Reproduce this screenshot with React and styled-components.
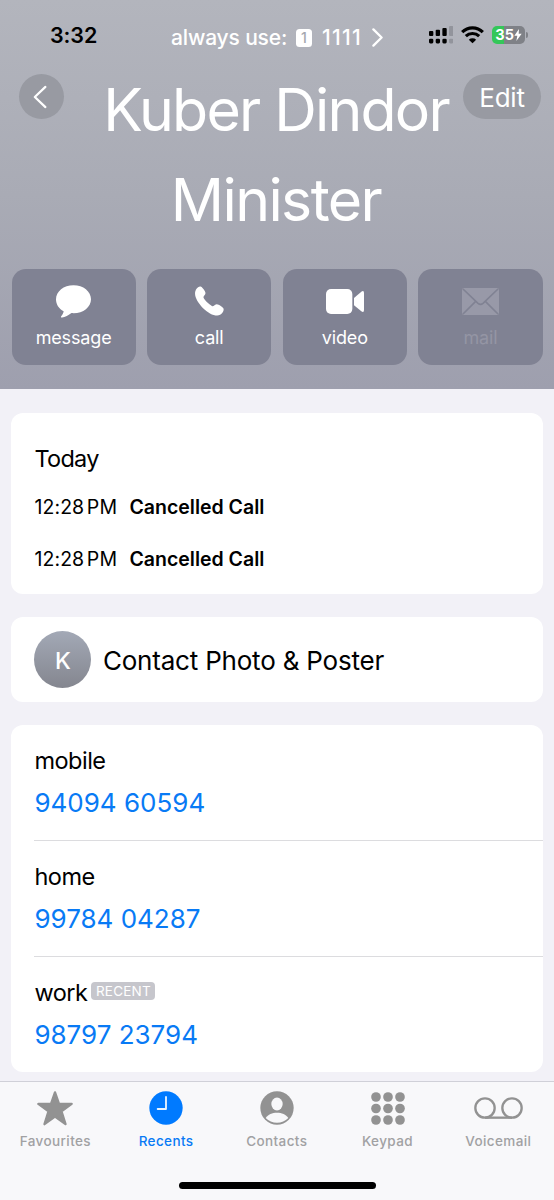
import styled, { createGlobalStyle } from "styled-components";

const calls = [
  { time: "12:28 PM", type: "Cancelled Call" },
  { time: "12:28 PM", type: "Cancelled Call" },
];

const phones = [
  { label: "mobile", number: "94094 60594" },
  { label: "home", number: "99784 04287" },
  { label: "work", number: "98797 23794", recent: true },
];

const SignalIcon = () => (
  <svg width="24.4" height="17.4" viewBox="0 0 73 52">
    <rect x="0" y="15" width="13" height="15" rx="3" />
    <rect x="20" y="11" width="13" height="19" rx="3" />
    <rect x="40" y="6" width="13" height="24" rx="3" />
    <rect x="60" y="0" width="13" height="30" rx="3" fill="#92949c" />
    <rect x="0" y="38" width="13" height="14" rx="4" />
    <rect x="20" y="38" width="13" height="14" rx="4" />
    <rect x="40" y="38" width="13" height="14" rx="4" />
    <rect x="60" y="38" width="13" height="14" rx="4" fill="#92949c" />
  </svg>
);

const WifiIcon = () => (
  <svg width="23" height="17.4" viewBox="0 0 69 52">
    <g fill="none" stroke="#000" strokeWidth="9.5">
      <path d="M3.5 18.5a44 44 0 0 1 62 0" />
      <path d="M14.5 30.5a29 29 0 0 1 40 0" />
    </g>
    <path d="M34.5 51.5L23.500 41a16 16 0 0 1 22 0z" />
  </svg>
);

const BoltIcon = () => (
  <svg width="8" height="12" viewBox="0 0 24 36">
    <path d="M15 0L1 20h9L7 36 23 14h-9z" fill="#fff" />
  </svg>
);

const ForwardIcon = () => (
  <svg width="11" height="19" viewBox="0 0 11 19">
    <path
      d="M1.400 1.400L9.600 9.500l-8.200 8.100"
      fill="none"
      stroke="#fff"
      strokeWidth="2.3"
      strokeLinecap="round"
      strokeLinejoin="round"
    />
  </svg>
);

const BackIcon = () => (
  <svg width="14" height="24" viewBox="0 0 14 24">
    <path
      d="M12.400 1.900L1.800 12l10.600 10.100"
      fill="none"
      stroke="#fff"
      strokeWidth="2.2"
      strokeLinecap="round"
      strokeLinejoin="round"
    />
  </svg>
);

const MessageIcon = () => (
  <svg width="35" height="33" viewBox="0 0 105 98">
    <path
      d="M52.500 0C82 0 105 18.500 105 42S82 84 52.500 84c-2 0-4 0-6-.3C38 90 27 96 18 97c-3 .2-4-2-2.500-4C19 89 22 84 23 78 8 70 0 57 0 42 0 18.500 23 0 52.500 0z"
      fill="#fff"
    />
  </svg>
);

const CallIcon = () => (
  <svg width="29" height="29.6" viewBox="0 0 86 88">
    <path
      d="M4 9C8 2 14 0 18 2c4 2 12 12 13 18 1 5-5 9-6 13-1 5 17 23 26 27 4 1 9-6 14-6s19 9 20 14c1 8-6 20-19 20C40 88 0 48 0 22 0 17 2 12 4 9z"
      fill="#fff"
    />
  </svg>
);

const VideoIcon = () => (
  <svg width="38" height="25" viewBox="0 0 114 75">
    <rect width="79" height="75" rx="15" fill="#fff" />
    <path d="M84 27L106 8q8-5 8 4v51q0 9-8 4L84 49z" fill="#fff" />
  </svg>
);

const MailIcon = () => (
  <svg width="37" height="27" viewBox="0 0 111 81">
    <rect width="111" height="81" rx="7" fill="#9899a8" />
    <path
      d="M3 3l45 43q7.500 6 15 0L108 3M3 78l38-38M108 78L70 40"
      fill="none"
      stroke="#808293"
      strokeWidth="5"
    />
  </svg>
);

const StarIcon = () => (
  <svg width="36" height="35" viewBox="0 0 108 105">
    <path
      d="M54 4L66 38.500H104L73.500 61 85.500 99.500 54 76.500 22.500 99.500 34.500 61 4 38.500H42z"
      fill="#929292"
      stroke="#929292"
      strokeWidth="7"
      strokeLinejoin="round"
    />
  </svg>
);

const ClockIcon = () => (
  <svg width="34" height="34" viewBox="0 0 102 102">
    <circle cx="51" cy="51" r="50" fill="#007aff" />
    <path
      d="M51 18v36H26"
      fill="none"
      stroke="#e8f4ff"
      strokeWidth="5.5"
      strokeLinecap="round"
      strokeLinejoin="round"
    />
  </svg>
);

const PersonIcon = () => (
  <svg width="34" height="34" viewBox="0 0 102 102">
    <circle cx="51" cy="51" r="50" fill="#929292" />
    <ellipse cx="51" cy="39" rx="17" ry="19.5" fill="#f8f8fa" />
    <path
      d="M17 81c7-11 20-16 34-16s27 5 34 16c-9 9-21 14.500-34 14.500S26 90 17 81z"
      fill="#f8f8fa"
    />
  </svg>
);

const KeypadIcon = () => (
  <svg width="34" height="33" viewBox="0 0 102 99">
    {[15, 51, 87].map((x) =>
      [15, 49.5, 84].map((y) => (
        <circle key={`${x}-${y}`} cx={x} cy={y} r="14.5" fill="#929292" />
      ))
    )}
  </svg>
);

const VoicemailIcon = () => (
  <svg width="49" height="22" viewBox="0 0 147 66">
    <g fill="none" stroke="#929292" strokeWidth="7">
      <circle cx="33" cy="33" r="29" />
      <circle cx="114" cy="33" r="29" />
      <path d="M33 62h81" />
    </g>
  </svg>
);

const actions = [
  { label: "message", icon: <MessageIcon /> },
  { label: "call", icon: <CallIcon /> },
  { label: "video", icon: <VideoIcon /> },
  { label: "mail", icon: <MailIcon />, disabled: true },
];

const tabs = [
  { label: "Favourites", icon: <StarIcon /> },
  { label: "Recents", icon: <ClockIcon />, active: true },
  { label: "Contacts", icon: <PersonIcon /> },
  { label: "Keypad", icon: <KeypadIcon /> },
  { label: "Voicemail", icon: <VoicemailIcon /> },
];

const App = () => {
  return (
    <Screen>
      <GlobalStyle />
      <Header>
        <StatusBar>
          <Clock>3:32</Clock>
          <SimPicker>
            <SimText>always use:</SimText>
            <SimBadge>1</SimBadge>
            <SimNumber>1111</SimNumber>
            <ForwardIcon />
          </SimPicker>
          <StatusIcons>
            <SignalIcon />
            <WifiIcon />
            <Battery>
              <BatteryBody>
                35
                <BoltIcon />
              </BatteryBody>
              <BatteryCap />
            </Battery>
          </StatusIcons>
        </StatusBar>
        <TitleRow>
          <BackButton>
            <BackIcon />
          </BackButton>
          <Title>
            <NameLine $spacing="-1.8px">Kuber Dindor</NameLine>
            <NameLine $spacing="-1.6px">Minister</NameLine>
          </Title>
          <EditButton>Edit</EditButton>
        </TitleRow>
        <Actions>
          {actions.map(({ label, icon, disabled }) => (
            <ActionButton key={label} $disabled={disabled}>
              <ActionIcon>{icon}</ActionIcon>
              {label}
            </ActionButton>
          ))}
        </Actions>
      </Header>
      <Content>
        <HistoryCard>
          <HistoryTitle>Today</HistoryTitle>
          {calls.map(({ time, type }, i) => (
            <CallRow key={i}>
              <CallTime>{time}</CallTime>
              <CallType>{type}</CallType>
            </CallRow>
          ))}
        </HistoryCard>
        <PosterCard>
          <Avatar>K</Avatar>
          <PosterLabel>Contact Photo & Poster</PosterLabel>
        </PosterCard>
        <PhonesCard>
          {phones.map(({ label, number, recent }) => (
            <PhoneRow key={label}>
              <PhoneLabel>
                {label}
                {recent && <RecentBadge>RECENT</RecentBadge>}
              </PhoneLabel>
              <PhoneNumber>{number}</PhoneNumber>
            </PhoneRow>
          ))}
        </PhonesCard>
      </Content>
      <TabBar>
        <Tabs>
          {tabs.map(({ label, icon, active }) => (
            <Tab key={label} $active={active}>
              <TabIcon>{icon}</TabIcon>
              {label}
            </Tab>
          ))}
        </Tabs>
        <HomeIndicator />
      </TabBar>
    </Screen>
  );
};

const GlobalStyle = createGlobalStyle`
  * {
    box-sizing: border-box;
  }
  body {
    margin: 0;
    font-family: Inter, "Liberation Sans", sans-serif;
    color: #000;
  }
  svg {
    display: block;
    flex-shrink: 0;
  }
`;

const Screen = styled.div`
  width: 554px;
  height: 1200px;
  display: flex;
  flex-direction: column;
  overflow: hidden;
  background: #f2f1f7;
`;

const Header = styled.header`
  height: 389px;
  background: linear-gradient(#b3b5bd, #a9abb5 50%, #9e9fae);
`;

const StatusBar = styled.div`
  height: 65px;
  display: grid;
  grid-template-columns: 171px 258px 1fr;
  align-items: start;
`;

const Clock = styled.div`
  padding: 22px 0 0 50px;
  font-size: 21.5px;
  line-height: 27px;
  font-weight: 600;
  letter-spacing: -0.1px;
`;

const SimPicker = styled.div`
  display: flex;
  align-items: center;
  padding-top: 24px;
  line-height: 27px;
  font-size: 21px;
  font-weight: 500;
  color: #fff;
`;

const SimText = styled.span`
  width: 125px;
  letter-spacing: -0.15px;
  white-space: nowrap;
`;

const SimBadge = styled.span`
  width: 16px;
  height: 18px;
  border-radius: 3.5px;
  background: #fff;
  color: #a5a7b0;
  font-size: 14px;
  line-height: 18px;
  text-align: center;
`;

const SimNumber = styled.span`
  width: 50px;
  padding-left: 10px;
  margin-right: 10px;
  letter-spacing: 1.3px;
`;

const StatusIcons = styled.div`
  display: flex;
  align-items: center;
  gap: 8px;
  padding-top: 26px;
`;

const Battery = styled.div`
  display: flex;
  align-items: center;
  gap: 1px;
`;

const BatteryBody = styled.div`
  width: 32.5px;
  height: 18px;
  display: flex;
  align-items: center;
  justify-content: center;
  border-radius: 5px;
  background: linear-gradient(90deg, #34c759 12px, #7f8187 12px);
  color: #fff;
  font-size: 14.5px;
  font-weight: 700;
  line-height: 18px;
`;

const BatteryCap = styled.div`
  width: 2px;
  height: 6px;
  border-radius: 0 2px 2px 0;
  background: #7f8187;
`;

const TitleRow = styled.div`
  height: 204px;
  display: grid;
  grid-template-columns: 91px 1fr 91px;
`;

const BackButton = styled.button`
  width: 45px;
  height: 45px;
  margin: 9px 0 0 19px;
  padding: 0 3px 0 0;
  display: flex;
  align-items: center;
  justify-content: center;
  border: 0;
  border-radius: 50%;
  background: #989aa2;
`;

const EditButton = styled.button`
  width: 78px;
  height: 45px;
  margin-top: 9px;
  padding: 2px 0 0;
  border: 0;
  border-radius: 23px;
  background: #989aa2;
  color: #fff;
  font-family: inherit;
  font-size: 26px;
  line-height: 43px;
  letter-spacing: -0.2px;
`;

const Title = styled.h1`
  margin: 0;
  padding-right: 2px;
  font-size: 59px;
  font-weight: 400;
  line-height: 90px;
  color: #fff;
  text-align: center;
`;

const NameLine = styled.div`
  letter-spacing: ${({ $spacing }) => $spacing};
  white-space: nowrap;
`;

const Actions = styled.div`
  display: grid;
  grid-template-columns: repeat(4, 1fr);
  gap: 11.5px;
  padding: 0 11.5px;
`;

const ActionButton = styled.button`
  height: 96px;
  padding: 15px 0 0;
  border: 0;
  border-radius: 14px;
  background: #808293;
  color: ${({ $disabled }) => ($disabled ? "#9495a4" : "#fff")};
  font-family: inherit;
  font-size: 18px;
  line-height: 24px;
  letter-spacing: -0.15px;
  display: flex;
  flex-direction: column;
  align-items: center;
`;

const ActionIcon = styled.span`
  height: 34px;
  margin-bottom: 8px;
  display: flex;
  align-items: center;
`;

const Content = styled.main`
  height: 692px;
  padding: 24.4px 11.5px 0 11.4px;
  display: flex;
  flex-direction: column;
  gap: 23px;
`;

const Card = styled.section`
  background: #fff;
  border-radius: 12px;
  padding-left: 23px;
`;

const HistoryCard = styled(Card)`
  height: 180.5px;
  padding-top: 31px;
`;

const HistoryTitle = styled.h2`
  margin: 0 0 5px;
  font-size: 23.5px;
  font-weight: 400;
  line-height: 30px;
  letter-spacing: -0.7px;
`;

const CallRow = styled.div`
  height: 52px;
  display: flex;
  font-size: 19.5px;
  line-height: 56px;
`;

const CallTime = styled.span`
  width: 95px;
  word-spacing: -3px;
  letter-spacing: 0.1px;
  white-space: nowrap;
`;

const CallType = styled.span`
  font-weight: 600;
`;

const PosterCard = styled(Card)`
  height: 85.5px;
  display: flex;
  align-items: center;
  gap: 11.5px;
`;

const Avatar = styled.div`
  width: 57px;
  height: 57px;
  border-radius: 50%;
  background: linear-gradient(#a3a9b6, #84868f);
  color: #fff;
  font-size: 23px;
  font-weight: 500;
  line-height: 60px;
  text-align: center;
`;

const PosterLabel = styled.span`
  padding-top: 2px;
  font-size: 26px;
  letter-spacing: -0.2px;
`;

const PhonesCard = styled(Card)`
  height: 347px;
`;

const PhoneRow = styled.div`
  height: 115.7px;
  padding-top: 21px;
  border-bottom: 1px solid #dcdcdf;

  &:last-child {
    border-bottom: 0;
  }
`;

const PhoneLabel = styled.div`
  height: 30px;
  display: flex;
  align-items: center;
  font-size: 23.5px;
  line-height: 30px;
  letter-spacing: -0.5px;
`;

const RecentBadge = styled.span`
  width: 64px;
  height: 18px;
  margin: 0 0 4px 4px;
  border-radius: 4px;
  background: #c6c6cc;
  color: #fff;
  font-size: 13.5px;
  line-height: 18px;
  letter-spacing: 0.2px;
  text-align: center;
`;

const PhoneNumber = styled.div`
  padding-top: 10px;
  font-size: 26px;
  line-height: 34px;
  color: #087af5;
`;

const TabBar = styled.nav`
  height: 119px;
  border-top: 1px solid #d0d0d8;
  background: #f8f8fa;
`;

const Tabs = styled.div`
  display: grid;
  grid-template-columns: repeat(5, 1fr);
  height: 100px;
  padding-right: 0.4px;
`;

const Tab = styled.div`
  display: flex;
  flex-direction: column;
  align-items: center;
  padding-top: 8px;
  font-size: 13.5px;
  font-weight: 500;
  line-height: 18px;
  letter-spacing: 0.4px;
  color: ${({ $active }) => ($active ? "#087af5" : "#a1a1a3")};
`;

const TabIcon = styled.span`
  height: 36px;
  margin-bottom: 6px;
  display: flex;
  align-items: center;
`;

const HomeIndicator = styled.div`
  width: 197px;
  height: 7px;
  margin: 0 auto;
  border-radius: 4px;
  background: #000;
`;

export default App;
